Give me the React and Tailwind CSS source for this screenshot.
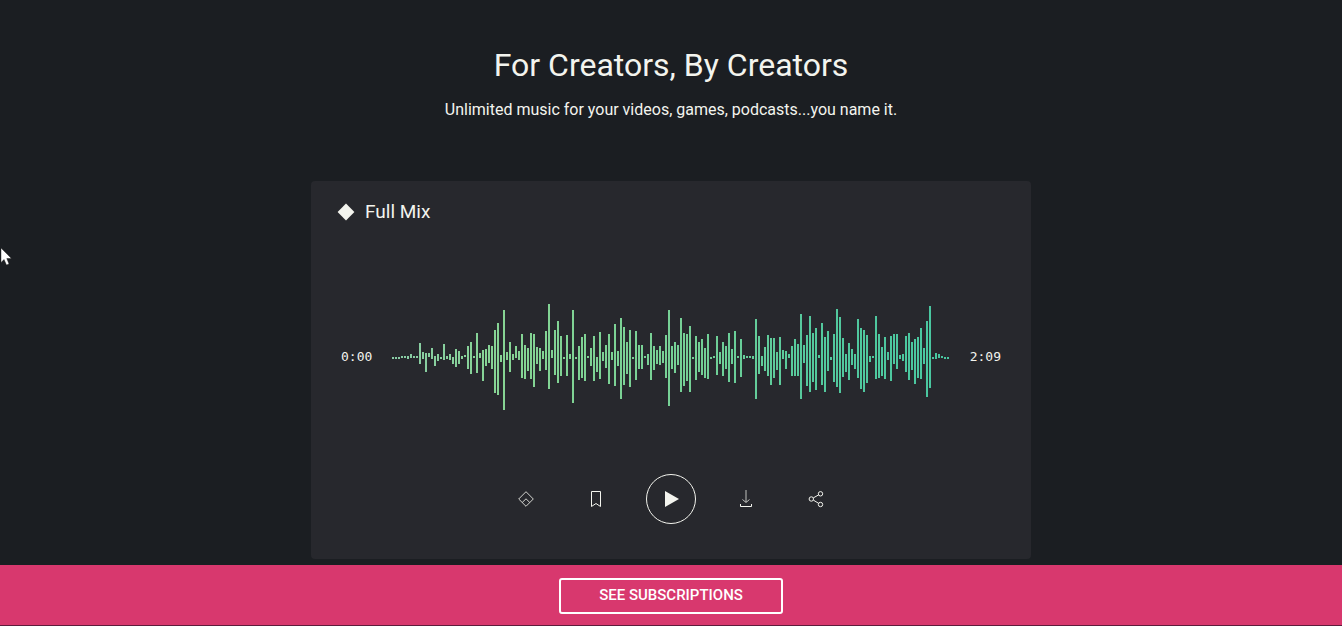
import { useState } from "react";

// [top, bottom] of each bar, in thirds of a pixel
const PEAKS = [
  [186, 192], [186, 192], [186, 192], [183, 190], [183, 190], [183, 191], [177, 189], [183, 189], [182, 189], [144, 207],
  [171, 192], [174, 231], [174, 186], [159, 192], [183, 213], [177, 198], [186, 192], [147, 195], [182, 192], [178, 195],
  [186, 208], [162, 216], [168, 207], [183, 191], [180, 187], [153, 221], [141, 236], [182, 190], [114, 234], [174, 190],
  [165, 258], [162, 212], [150, 204], [152, 221], [105, 293], [84, 300], [180, 200], [44, 345], [171, 195], [141, 231],
  [177, 194], [153, 190], [168, 194], [117, 248], [150, 252], [159, 228], [114, 252], [117, 275], [156, 207], [159, 228],
  [168, 192], [108, 225], [27, 282], [165, 189], [105, 240], [78, 264], [123, 242], [186, 192], [120, 243], [178, 192],
  [45, 324], [186, 192], [154, 255], [126, 248], [118, 258], [182, 188], [159, 213], [123, 257], [186, 231], [110, 251],
  [171, 197], [150, 219], [117, 266], [171, 194], [87, 272], [168, 213], [69, 312], [96, 270], [141, 237], [105, 276],
  [186, 192], [109, 255], [150, 222], [150, 221], [182, 188], [177, 210], [114, 255], [154, 224], [165, 207], [152, 210],
  [168, 204], [120, 249], [45, 332], [153, 222], [141, 235], [150, 210], [69, 290], [114, 273], [117, 258], [93, 291],
  [186, 192], [123, 254], [141, 231], [132, 240], [159, 249], [118, 252], [186, 192], [182, 189], [123, 240], [171, 207],
  [141, 243], [152, 221], [114, 261], [162, 207], [109, 264], [183, 190], [132, 246], [180, 192], [182, 189], [182, 189],
  [182, 191], [72, 312], [123, 237], [182, 213], [156, 228], [120, 243], [128, 271], [129, 248], [171, 225], [126, 271],
  [165, 192], [168, 222], [177, 189], [153, 243], [132, 243], [147, 243], [56, 312], [150, 204], [120, 273], [63, 291],
  [114, 261], [99, 285], [180, 190], [84, 270], [126, 290], [109, 228], [186, 194], [117, 262], [42, 276], [66, 294],
  [129, 246], [177, 231], [144, 255], [162, 210], [177, 221], [73, 249], [99, 281], [105, 290], [120, 263], [182, 201],
  [182, 189], [63, 252], [117, 249], [155, 242], [126, 252], [171, 195], [123, 258], [117, 207], [117, 221], [180, 192],
  [177, 198], [123, 231], [114, 254], [141, 225], [132, 267], [126, 249], [99, 252], [159, 207], [78, 306], [33, 279],
  [186, 192], [174, 192], [177, 189], [182, 189], [186, 192], [186, 192],
];

const BAR_PITCH = 3;
const WAVE_HEIGHT = 124;

function Waveform() {
  const width = PEAKS.length * BAR_PITCH;

  return (
    <svg
      viewBox={`0 0 ${width} ${WAVE_HEIGHT}`}
      className="w-full max-w-[558px] min-w-0"
      shapeRendering="crispEdges"
      role="img"
      aria-label="Waveform"
    >
      <defs>
        <linearGradient id="wave" gradientUnits="userSpaceOnUse" x1="0" y1="0" x2={width} y2="0">
          <stop offset="0" stopColor="#89cca6" />
          <stop offset="0.2" stopColor="#86d493" />
          <stop offset="0.55" stopColor="#74d096" />
          <stop offset="0.75" stopColor="#54c99d" />
          <stop offset="1" stopColor="#48c6a0" />
        </linearGradient>
      </defs>
      {PEAKS.map(([top, bottom], i) => {
        const y = Math.round(top / 3);
        return (
          <rect
            key={i}
            x={i * BAR_PITCH}
            y={y}
            width="2"
            height={Math.round(bottom / 3) - y}
            fill="url(#wave)"
          />
        );
      })}
    </svg>
  );
}

function SimilarIcon() {
  return (
    <svg className="size-5" viewBox="0 0 20 20" fill="none" stroke="currentColor" strokeWidth="1" opacity="0.85">
      <path d="M10 2.7 17.3 10 10 17.3 2.7 10Z" />
      <path d="M6.2 13.5 10 9.8 13.8 13.5" />
    </svg>
  );
}

function BookmarkIcon() {
  return (
    <svg className="size-5" viewBox="0 0 20 20" fill="none" stroke="currentColor" strokeWidth="1">
      <path d="M5.5 2.5h9v15L10 14.5 5.5 17.5Z" />
    </svg>
  );
}

function DownloadIcon() {
  return (
    <svg className="size-5" viewBox="0 0 20 20" fill="none" stroke="currentColor" strokeWidth="1">
      <path d="M4.5 15v2.5h11V15" />
      <path d="M10 1v12M6.5 10.5 10 13.5 13.5 10.5" opacity="0.75" />
    </svg>
  );
}

function ShareIcon() {
  return (
    <svg className="size-5" viewBox="0 0 20 20" fill="none" stroke="currentColor" strokeWidth="1">
      <circle cx="5.3" cy="10" r="2.2" />
      <circle cx="14.5" cy="4.8" r="2.2" />
      <circle cx="14.5" cy="15.5" r="2.2" />
      <path d="M7.3 8.9 12.6 5.9M7.3 11.1 12.6 14.3" />
    </svg>
  );
}

export default function App() {
  const [playing, setPlaying] = useState(false);

  return (
    <div className="relative flex min-h-screen flex-col bg-[#1b1e22] font-['Roboto',sans-serif] text-[#f3f4ee]">
      <header className="px-4 pt-11 text-center">
        <h1 className="text-[32px] leading-[42px]">For Creators, By Creators</h1>
        <p className="mt-3 text-base leading-6">
          Unlimited music for your videos, games, podcasts...you name it.
        </p>
      </header>

      <main className="px-4 pt-[59px] pb-1.5">
        <section className="mx-auto max-w-[720px] rounded bg-[#27282d] px-[26px] pt-[18px] pb-[35px]">
          <div className="flex items-center gap-2.5">
            <svg className="size-[18px]" viewBox="0 0 18 18" fill="currentColor">
              <path d="M9 .6 17.4 9 9 17.4 .6 9Z" />
            </svg>
            <h2 className="text-[19px] leading-[26px]">Full Mix</h2>
          </div>

          <div className="mt-[70px] flex items-center justify-between gap-4 px-1 font-['DejaVu_Sans_Mono',monospace] text-[13px]">
            <span>0:00</span>
            <Waveform />
            <span>2:09</span>
          </div>

          <div className="mt-[55px] flex items-center justify-center gap-[50px]">
            <button type="button" aria-label="Find similar">
              <SimilarIcon />
            </button>
            <button type="button" aria-label="Bookmark">
              <BookmarkIcon />
            </button>
            <button
              type="button"
              aria-label="Play"
              aria-pressed={playing}
              onClick={() => setPlaying(!playing)}
              className="-mx-[10px] flex size-[50px] items-center justify-center rounded-full border border-current"
            >
              <svg className="size-4" viewBox="0 0 16 16" fill="currentColor">
                <path d="M2 0 16 8 2 16Z" />
              </svg>
            </button>
            <button type="button" aria-label="Download">
              <DownloadIcon />
            </button>
            <button type="button" aria-label="Share">
              <ShareIcon />
            </button>
          </div>
        </section>
      </main>

      <footer className="mt-auto flex justify-center border-b border-[#5e1c3c] bg-[#d8386e] px-4 pt-[13px] pb-[11px]">
        <a
          href="#subscriptions"
          className="flex h-9 w-56 items-center justify-center rounded-[3px] border-2 border-white pb-0.5 text-[15px] leading-5 font-medium text-white"
        >
          SEE SUBSCRIPTIONS
        </a>
      </footer>

      <svg className="pointer-events-none absolute top-[247px] left-0 h-[18px] w-3" viewBox="0 0 12 18" fill="#fff">
        <path d="M1 1V15.5L4 12.5 6.5 18 9 17 6.8 11.5H11.5Z" stroke="#111" strokeWidth="0.4" />
      </svg>
    </div>
  );
}
